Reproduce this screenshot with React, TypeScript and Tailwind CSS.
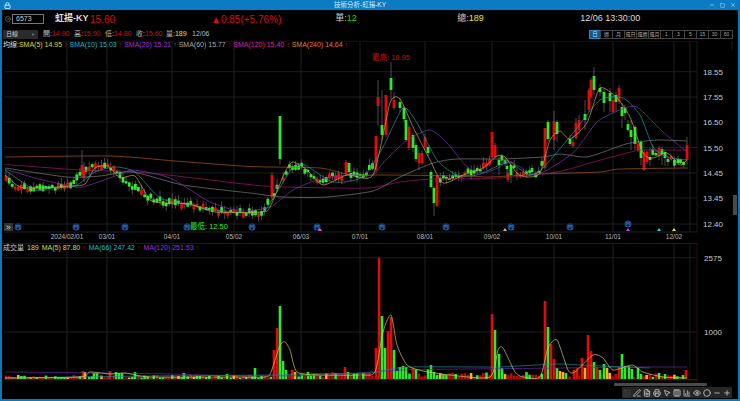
import React from "react";
import { Lock, Minus, Plus, Square, X, Printer, MousePointer2, Eye, Circle, Image, FileText, Columns3, PenLine, BarChart3, CircleDot, ChevronsRight } from "lucide-react";

const FONT = "font-['Liberation_Sans','Noto_Sans_CJK_TC',sans-serif]";
const RED = "#e00b0b";
const GREEN = "#2fe82f";

type Pt = [number, number];
// x, top, bottom, wick top, wick bottom, up?
type Candle = [number, number, number, number, number, 0 | 1];

const interp = (pts: Pt[], x: number) => {
  if (x <= pts[0][0]) return pts[0][1];
  for (let i = 1; i < pts.length; i++) {
    if (x <= pts[i][0]) {
      const [x0, y0] = pts[i - 1];
      const [x1, y1] = pts[i];
      return y0 + ((y1 - y0) * (x - x0)) / (x1 - x0);
    }
  }
  return pts[pts.length - 1][1];
};

const rnd = (i: number) => {
  const v = Math.sin(i * 12.9898 + 4.1) * 43758.5453;
  return v - Math.floor(v);
};

const smooth = (pts: Pt[]) => {
  let d = `M${pts[0][0]} ${pts[0][1]}`;
  for (let i = 0; i < pts.length - 1; i++) {
    const p0 = pts[Math.max(i - 1, 0)];
    const p1 = pts[i];
    const p2 = pts[i + 1];
    const p3 = pts[Math.min(i + 2, pts.length - 1)];
    const c1x = p1[0] + (p2[0] - p0[0]) / 9;
    const c1y = p1[1] + (p2[1] - p0[1]) / 9;
    const c2x = p2[0] - (p3[0] - p1[0]) / 9;
    const c2y = p2[1] - (p3[1] - p1[1]) / 9;
    d += `C${c1x.toFixed(1)} ${c1y.toFixed(1)} ${c2x.toFixed(1)} ${c2y.toFixed(1)} ${p2[0]} ${p2[1]}`;
  }
  return d;
};

const ma240: Pt[] = [[5,157],[110,156],[175,161],[250,166.5],[320,168],[350,175],[383,175],[467,176],[490,177],[540,174],[600,172],[620,169],[688,168]];
const ma120: Pt[] = [[5,164.5],[80,170],[110,171],[150,173],[250,184.7],[283,187],[367,188],[400,182],[433,179],[500,178],[557,172],[590,163],[623,154],[640,150],[657,150],[687,150]];
const ma60: Pt[] = [[5,168],[67,177],[100,176],[133,172],[183,185],[250,193],[283,197],[327,197],[373,191],[400,177],[433,163],[457,159],[500,159],[543,157],[560,154],[587,157],[617,147],[630,143],[657,140],[687,141]];
const ma20: Pt[] = [[5,169],[35,178],[70,186],[83,187],[118,175],[133,170],[170,178],[210,202],[240,211],[270,207],[293,190],[317,180],[347,175],[373,175],[383,163],[407,140],[430,130],[447,143],[467,167],[483,173],[500,167],[507,160],[520,167],[537,175],[573,153],[597,122],[620,110],[637,107],[663,132],[687,152]];
const ma10: Pt[] = [[5,170],[35,190],[50,188],[75,186],[95,172],[115,167],[135,172],[160,198],[190,205],[215,210],[260,213],[272,200],[293,167],[305,165],[333,182],[363,177],[383,147],[403,108],[417,123],[437,160],[457,175],[477,175],[500,165],[510,162],[517,167],[530,175],[543,168],[573,133],[600,100],[623,98],[640,115],[653,147],[667,157],[687,160]];
const ma5: Pt[] = [[5,175],[20,187],[40,188],[72,186],[85,184],[95,168],[108,166],[120,178],[135,176],[150,200],[165,203],[190,204],[215,212],[262,212],[270,207],[285,172],[293,162],[307,170],[323,185],[347,175],[373,175],[390,103],[400,99],[413,127],[430,160],[443,183],[463,175],[483,168],[497,156],[505,157],[517,173],[527,177],[540,173],[550,140],[560,131],[570,139],[587,123],[600,88],[617,98],[630,117],[643,153],[653,158],[667,153],[680,165],[687,160]];

// path the small candles sit on
const body: Pt[] = [[5,178],[17,188],[50,188],[72,186],[83,170],[95,166],[110,167],[120,175],[125,180],[140,192],[155,200],[170,203],[190,204],[210,208],[220,212],[262,213],[272,197],[290,166],[300,165],[310,175],[320,182],[330,177],[365,175],[376,160],[440,180],[460,175],[483,168],[500,155],[520,175],[540,172],[545,150],[600,90],[640,150],[660,156],[688,165]];

const bigCandles: Candle[] = [
  [82,165,175,150,178,1],[84,170,178,162,182,1],[272,175,197,172,200,1],[280,116,159,116,165,0],
  [346,162,174,160,176,1],[349,163,172,163,176,0],[376,136,170,136,172,1],[378,97,106,80,126,1],[382,125,135,90,140,0],
  [386,95,135,95,137,1],[391,78,90,62,100,0],[394,100,108,92,110,1],[400,102,108,98,112,0],[404,108,119,106,122,0],
  [406,120,140,118,142,0],[409,127,148,125,150,1],[413,135,148,133,152,0],[416,145,159,143,162,0],[419,153,163,150,170,1],
  [422,153,163,151,165,1],[425,137,147,134,150,1],[428,147,153,145,156,0],[431,172,187,170,188,0],[434,188,203,186,216,0],[437,175,206,175,207,1],
  [492,132,157,132,158,1],[495,145,157,143,158,1],[499,160,165,156,175,0],[507,166,169,160,176,0],[508,173,180,170,182,1],[511,165,175,163,183,0],
  [517,173,176,168,180,1],[532,168,172,165,175,0],[545,128,168,128,170,1],[548,122,139,120,142,0],[554,121,140,111,150,1],[557,122,134,120,142,0],
  [570,139,144,135,146,0],[573,142,146,135,148,1],[576,123,138,118,140,1],[579,120,130,115,134,1],[585,114,120,100,130,0],[589,90,110,88,112,1],
  [591,80,97,78,99,1],[594,76,90,67,95,0],[600,88,92,84,96,0],[604,92,103,88,112,0],[610,93,101,88,112,0],[613,100,112,96,113,1],
  [616,95,102,92,112,0],[619,88,102,85,104,1],[622,107,116,103,128,0],[625,108,113,105,120,0],[628,124,130,120,132,0],[631,130,137,120,150,0],
  [635,127,144,125,150,0],[638,144,150,142,152,1],[641,142,158,140,165,0],[644,152,170,150,171,1],[647,152,162,150,164,1],[650,157,160,148,166,0],
  [659,148,156,146,160,1],[662,149,154,147,165,0],[665,152,158,150,166,0],[668,159,162,156,166,0],[678,159,163,156,165,0],[687,145,160,137,165,1],
];

const STEP = 3.08;
const candles: Candle[] = [...bigCandles];
const taken = new Set(bigCandles.map((c) => Math.round((c[0] - 6) / STEP)));
for (let i = 0; i < 222; i++) {
  if (taken.has(i)) continue;
  const x = 6 + i * STEP;
  if (x > 686) break;
  // the rally legs are all drawn by hand above
  if (x > 376 && x < 437) continue;
  if (x > 545 && x < 650) continue;
  const c = interp(body, x) + (rnd(i) - 0.5) * 5;
  const h = 2 + rnd(i + 40) * 4;
  const up = rnd(i + 90) > 0.68 ? 1 : 0;
  candles.push([+x.toFixed(1), +(c - h / 2).toFixed(1), +(c + h / 2).toFixed(1), +(c - h / 2 - rnd(i + 7) * 6).toFixed(1), +(c + h / 2 + rnd(i + 11) * 5).toFixed(1), up]);
}

// x, top of bar
const bigVol: [number, number, string][] = [
  [83,371,RED],[85,372,"#ffb020"],[94,373,GREEN],[97,373,GREEN],[110,371,RED],[116,372,GREEN],[119,373,GREEN],[122,373,GREEN],[135,372,GREEN],[184,373,GREEN],[227,374,GREEN],
  [255,368,GREEN],[274,350,RED],[277,328,RED],[280,306,GREEN],[283,361,GREEN],[286,370,GREEN],[292,370,RED],[295,372,"#ffb020"],[308,372,GREEN],[345,367,RED],[348,372,GREEN],
  [376,348,RED],[379,258,RED],[382,316,GREEN],[385,348,GREEN],[388,331,RED],[391,317,RED],[394,350,GREEN],[397,371,GREEN],[400,367,GREEN],[403,366,GREEN],[406,367,GREEN],
  [413,368,RED],[416,369,GREEN],[431,365,GREEN],[428,369,GREEN],[434,372,GREEN],[492,314,RED],[495,330,GREEN],[499,354,GREEN],[502,368,GREEN],[505,374,"#ffb020"],
  [545,301,RED],[548,327,GREEN],[551,344,RED],[554,359,RED],[557,368,GREEN],[560,371,"#ffb020"],[563,372,"#ffb020"],[566,373,GREEN],[574,370,RED],[577,368,RED],[582,358,RED],[585,368,"#ffb020"],
  [588,335,RED],[591,351,RED],[594,362,GREEN],[597,367,RED],[600,370,GREEN],[604,364,GREEN],[607,368,"#ffb020"],[619,367,RED],[622,354,GREEN],[625,366,GREEN],[629,366,GREEN],[632,369,GREEN],[638,368,GREEN],[641,374,GREEN],
  [665,374,GREEN],[686,370,RED],[683,375,GREEN],
];
const volBars: [number, number, string][] = [...bigVol];
const volTaken = new Set(bigVol.map((b) => Math.round((b[0] - 6) / STEP)));
for (let i = 0; i < 222; i++) {
  if (volTaken.has(i)) continue;
  const x = +(6 + i * STEP).toFixed(1);
  if (x > 686) break;
  const h = x > 290 ? 2 + rnd(i + 3) * 5 : 1 + rnd(i + 3) * 3;
  const r = rnd(i + 21);
  volBars.push([x, +(379 - h).toFixed(1), r < 0.48 ? "#b80c0c" : r < 0.9 ? GREEN : "#ffb020"]);
}

const volMa5: Pt[] = [[5,378],[80,377],[90,372],[110,374],[125,373],[150,377],[230,377],[265,377],[271,372],[280,345],[285,342],[290,350],[297,372],[320,375],[360,375],[375,372],[383,332],[391,315],[397,345],[407,365],[423,371],[450,375],[490,377],[498,350],[503,348],[515,372],[523,377],[540,377],[548,348],[557,340],[568,370],[575,372],[593,355],[603,358],[613,370],[632,365],[643,372],[663,377],[687,378]];
const volMa66: Pt[] = [[5,378],[150,376],[275,375],[300,374],[370,373],[385,370],[410,367],[483,367],[500,367],[557,364],[580,365],[623,367],[650,368]];
const volMa120: Pt[] = [[5,372],[100,373],[170,374],[250,376],[330,375],[400,370],[470,369],[560,368],[620,367],[687,367]];

const grid = [71.7, 97, 122, 147.5, 173, 198, 224];
const dates: [string, number][] = [["2024/02/01",67],["03/01",107],["04/01",172],["05/02",234],["06/03",301],["07/01",360],["08/01",425],["09/02",492],["10/01",554],["11/01",613],["12/02",674]];
const priceLabels: [string, number][] = [["18.55",71.7],["17.55",97],["16.50",122],["15.50",147.5],["14.45",173],["13.45",198],["12.40",224]];
const markers: [number, number][] = [[18,227],[76,227],[125,227],[187,227],[252,227],[317,227],[382,227],[446,227],[511,227],[570,227],[628,224]];
const triangles: [number, string][] = [[320,"#f050c0"],[505,"#bbbbbb"],[628,"#c040f0"],[659,"#30c8e0"],[674,"#e8e840"]];

function PriceChart() {
  return (
    <svg viewBox="2 41 736 202" className="block h-[202px] w-[736px]">
      {grid.map((y) => <line key={y} x1={4} x2={697} y1={y} y2={y} stroke="#242424" strokeWidth={0.8} />)}
      {dates.map(([d, x]) => <line key={d} x1={x} x2={x} y1={41} y2={232} stroke="#262626" strokeWidth={0.8} />)}
      <line x1={4} x2={697} y1={41} y2={41} stroke="#262626" strokeWidth={0.8} />
      <line x1={4} x2={697} y1={232} y2={232} stroke="#2a2a2a" strokeWidth={0.8} />
      <line x1={690} x2={690} y1={41} y2={232} stroke="#262626" strokeWidth={0.8} />
      <line x1={697} x2={697} y1={41} y2={232} stroke="#222" strokeWidth={0.8} />
      <line x1={732} x2={732} y1={41} y2={50} stroke="#222" strokeWidth={0.8} />
      {candles.map((c, i) => (
        <g key={i}>
          <line x1={c[0]} x2={c[0]} y1={c[3]} y2={c[4]} stroke="#6a6a6a" strokeWidth={0.7} />
          <rect x={c[0] - 1.4} y={c[1]} width={2.8} height={Math.max(c[2] - c[1], 0.8)} fill={c[5] ? RED : GREEN} />
        </g>
      ))}
      <path d={smooth(ma240)} fill="none" stroke="#a85a18" strokeWidth={0.7} />
      <path d={smooth(ma120)} fill="none" stroke="#a01868" strokeWidth={0.7} />
      <path d={smooth(ma60)} fill="none" stroke="#7c7c7c" strokeWidth={0.7} />
      <path d={smooth(ma20)} fill="none" stroke="#7c34b0" strokeWidth={0.7} />
      <path d={smooth(ma10)} fill="none" stroke="#1f98a4" strokeWidth={0.7} />
      <path d={smooth(ma5)} fill="none" stroke="#d0a848" strokeWidth={0.7} />
      {markers.map(([x, y]) => (
        <g key={x}>
          <circle cx={x} cy={y} r={3.2} fill="#06204a" stroke="#1c5fb8" strokeWidth={0.7} />
          <text x={x} y={y + 2} textAnchor="middle" fontSize={5} fill="#5f9ae0">門</text>
        </g>
      ))}
      {triangles.map(([x, c]) => <polygon key={x} points={`${x - 2},231 ${x + 2},231 ${x},228`} fill={c} />)}
      <text x={391} y={60} textAnchor="middle" fontSize={7.5} fill="#c81010">最高: 18.95</text>
      <text x={209} y={229} textAnchor="middle" fontSize={7.5} fill={GREEN}>最低: 12.50</text>
      {dates.map(([d, x]) => <text key={d} x={x} y={239} textAnchor="middle" fontSize={6.5} fill="#b8b8b8">{d}</text>)}
      {priceLabels.map(([p, y]) => <text key={p} x={713} y={y + 3} textAnchor="middle" fontSize={8} fill="#c8c8c8">{p}</text>)}
    </svg>
  );
}

function VolumeChart() {
  return (
    <svg viewBox="2 243 736 140" className="block h-[140px] w-[736px]">
      <line x1={2} x2={697} y1={243.5} y2={243.5} stroke="#4a1020" strokeWidth={0.8} />
      <line x1={4} x2={697} y1={257.7} y2={257.7} stroke="#242424" strokeWidth={0.8} />
      <line x1={4} x2={697} y1={332} y2={332} stroke="#242424" strokeWidth={0.8} />
      {dates.map(([d, x]) => <line key={d} x1={x} x2={x} y1={243} y2={380} stroke="#262626" strokeWidth={0.8} />)}
      <line x1={690} x2={690} y1={243} y2={381} stroke="#222" strokeWidth={0.8} />
      <line x1={697} x2={697} y1={243} y2={381} stroke="#3a0e1a" strokeWidth={0.8} />
      <line x1={4} x2={697} y1={379.5} y2={379.5} stroke="#5a0c0c" strokeWidth={1} />
      <line x1={4} x2={697} y1={381} y2={381} stroke="#222" strokeWidth={0.6} />
      {volBars.map((b, i) => <rect key={i} x={b[0] - 1.3} y={b[1]} width={2.6} height={379 - b[1]} fill={b[2]} />)}
      <path d={smooth(volMa120)} fill="none" stroke="#6a2aa8" strokeWidth={0.7} />
      <path d={smooth(volMa66)} fill="none" stroke="#1f8a98" strokeWidth={0.7} />
      <path d={smooth(volMa5)} fill="none" stroke="#d8c860" strokeWidth={0.7} />
      <text x={713} y={261} textAnchor="middle" fontSize={8} fill="#c8c8c8">2575</text>
      <text x={713} y={335} textAnchor="middle" fontSize={8} fill="#c8c8c8">1000</text>
    </svg>
  );
}

const periods = ["週", "月", "還日", "還週", "還月", "1", "3", "5", "15", "30", "60"];

const smaItems: [string, string, string][] = [
  ["SMA(5) 14.95", "text-[#d8d83c]", RED],
  ["SMA(10) 15.03", "text-[#20b8c8]", RED],
  ["SMA(20) 15.21", "text-[#a030e0]", "#20c020"],
  ["SMA(60) 15.77", "text-[#a8a8a8]", RED],
  ["SMA(120) 15.40", "text-[#e020a0]", RED],
  ["SMA(240) 14.64", "text-[#e87a20]", RED],
];

const tools = [Image, PenLine, FileText, Printer, MousePointer2, Columns3, BarChart3, Eye, Circle, Minus, Plus];

export default function App() {
  return (
    <div className={`${FONT} relative flex h-[401px] w-[740px] flex-col overflow-hidden bg-black border-x-2 border-b-2 border-[#0b78bd]`}>
      <div className="-mx-[2px] flex h-[10px] shrink-0 items-center justify-between bg-[#0b7cc4] px-1 text-[#d8eefb]">
        <Lock className="h-[7px] w-[7px]" strokeWidth={3} />
        <span className="text-[6.5px] leading-none">技術分析-虹揚-KY</span>
        <div className="flex items-center gap-[5px]">
          <Minus className="h-[6px] w-[6px]" strokeWidth={2} />
          <Square className="h-[5px] w-[5px]" strokeWidth={2} />
          <X className="h-[6px] w-[6px]" strokeWidth={2} />
        </div>
      </div>

      <div className="flex h-[18px] shrink-0 items-center">
        <CircleDot className="ml-[3px] h-[6px] w-[6px] text-[#999]" />
        <div className="ml-[1px] flex h-[10px] w-[32px] items-center border border-[#777] pl-[3px] text-[7px] text-[#ccc]">6573</div>
        <span className="ml-[11px] w-[35px] text-[9px] font-bold text-[#ddd]">虹揚-KY</span>
        <span className="text-[10px] text-[#d01010]">15.60</span>
        <span className="ml-[96px] text-[10px] text-[#d01010]">▲0.85(+5.76%)</span>
        <span className="ml-[54px] w-[50px] text-[9px] text-[#ccc]">單:<span className="text-[#20d820]">12</span></span>
        <span className="ml-[72px] w-[50px] text-[9px] text-[#ccc]">總:<span className="text-[#e8e030]">189</span></span>
        <span className="ml-[73px] text-[9px] text-[#ddd]">12/06 13:30:00</span>
      </div>

      <div className="flex h-[13px] shrink-0 items-center text-[7px]">
        <div className="ml-[1px] flex h-[9px] w-[35px] items-center justify-between bg-[#2a2a2a] px-[3px] text-[6px] text-[#ccc]">
          <span>日線</span>
          <span className="text-[4px] text-[#888]">▼</span>
        </div>
        <div className="ml-[5px] flex text-[#bbb]">
          <span className="w-[31px]">開:<span className="text-[#d01010]">14.90</span></span>
          <span className="w-[31px]">高:<span className="text-[#d01010]">15.90</span></span>
          <span className="w-[31px]">低:<span className="text-[#d01010]">14.80</span></span>
          <span className="w-[30px]">收:<span className="text-[#d01010]">15.60</span></span>
          <span className="w-[26px]">量:<span className="text-[#e8e030]">189</span></span>
          <span>12/06</span>
        </div>
        <div className="ml-auto mr-[5px] flex">
          <div className="flex h-[9px] w-[12px] items-center justify-center border border-[#2b86c0] bg-[#11588c] text-[5.5px] text-[#cde]">日</div>
          {periods.map((p) => (
            <div key={p} className="-ml-px flex h-[9px] w-[13px] items-center justify-center border border-[#444] text-[5px] text-[#aaa]">{p}</div>
          ))}
        </div>
      </div>

      <div className="relative shrink-0">
        <PriceChart />
        <div className="absolute left-[1px] top-0 flex h-[9px] items-center whitespace-nowrap text-[7px]">
          <span className="text-[#ddd]">均線:</span>
          <div className="flex gap-[2px]">
            {smaItems.map(([t, cls, arrow]) => (
              <span key={t} className={cls}>{t} <span style={{ color: arrow }}>↑</span></span>
            ))}
          </div>
        </div>
        <div className="absolute left-[2px] top-[182px] flex h-[8px] w-[9px] items-center justify-center bg-[#333] text-[#ddd]">
          <ChevronsRight className="h-[7px] w-[7px]" strokeWidth={3} />
        </div>
      </div>

      <div className="relative shrink-0">
        <VolumeChart />
        <div className="absolute left-[1px] top-[1px] flex h-[8px] items-center gap-[3px] whitespace-nowrap text-[7px]">
          <span className="text-[#ccc]">成交量</span>
          <span className="text-[#d8d83c]">189</span>
          <span className="text-[#d8d83c]">MA(5) 87.80 <span className="text-[#d01010]">↑</span></span>
          <span className="text-[#20b8c8]">MA(66) 247.42 <span className="text-[#d01010]">↑</span></span>
          <span className="text-[#a030e0]">MA(120) 251.53 <span className="text-[#d01010]">↑</span></span>
        </div>
      </div>

      <div className="flex min-h-0 flex-1 flex-col items-end">
        <div className="mr-[31px] h-[3px] w-[93px] rounded-[1px] bg-[#4a4a4a]" />
        <div className="mr-[6px] mt-[1px] flex h-[11px] w-[110px] items-center justify-between bg-[#262626] px-[1px]">
          {tools.map((Icon, i) => (
            <Icon key={i} className={`h-[8px] w-[8px] ${i === 0 ? "text-[#444]" : "text-[#c4c4c4]"}`} strokeWidth={2.5} />
          ))}
        </div>
      </div>

      <div className="absolute left-[731px] top-[195px] h-[20px] w-[4px] bg-[#4a4a4a]" />
    </div>
  );
}
